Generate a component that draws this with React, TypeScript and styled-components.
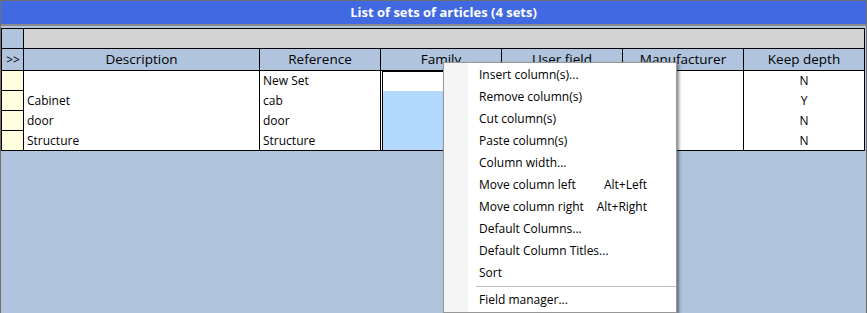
import React from 'react'
import styled, { createGlobalStyle } from 'styled-components'

const UI_FONT = `'Open Sans', 'Noto Sans', sans-serif`

const GlobalStyle = createGlobalStyle`
  html, body {
    margin: 0;
    padding: 0;
    overflow: hidden;
  }
  body {
    font-family: ${UI_FONT};
  }
`

const COLUMNS = [
  { key: 'description', title: 'Description', width: 236, align: 'left' },
  { key: 'reference', title: 'Reference', width: 121, align: 'left' },
  { key: 'family', title: 'Family', width: 121, align: 'left' },
  { key: 'userField', title: 'User field', width: 121, align: 'left' },
  { key: 'manufacturer', title: 'Manufacturer', width: 121, align: 'left' },
  { key: 'keepDepth', title: 'Keep depth', width: 120, align: 'center' },
] as const

type Row = Record<string, string> & { selected?: boolean }

const ROWS: Row[] = [
  { description: '', reference: 'New Set', family: '', userField: '', manufacturer: '', keepDepth: 'N' },
  { description: 'Cabinet', reference: 'cab', family: '', userField: '', manufacturer: '', keepDepth: 'Y', selected: true },
  { description: 'door', reference: 'door', family: '', userField: '', manufacturer: '', keepDepth: 'N', selected: true },
  { description: 'Structure', reference: 'Structure', family: '', userField: '', manufacturer: '', keepDepth: 'N', selected: true },
]

type MenuEntry = { label: string, shortcut?: string } | 'separator'

const MENU: MenuEntry[] = [
  { label: 'Insert column(s)...' },
  { label: 'Remove column(s)' },
  { label: 'Cut column(s)' },
  { label: 'Paste column(s)' },
  { label: 'Column width...' },
  { label: 'Move column left', shortcut: 'Alt+Left' },
  { label: 'Move column right', shortcut: 'Alt+Right' },
  { label: 'Default Columns...' },
  { label: 'Default Column Titles...' },
  { label: 'Sort' },
  'separator',
  { label: 'Field manager...' },
]

const Window = styled.div`
  position: relative;
  width: 867px;
  height: 313px;
  box-sizing: border-box;
  border: 1px solid #6f6f6f;
  border-bottom: none;
  background: #b0c4de;
  overflow: hidden;
`

const TitleBar = styled.div`
  height: 23px;
  line-height: 23px;
  padding-left: 20px;
  background: #4169e1;
  color: #fff;
  font-size: 13px;
  font-weight: bold;
  text-align: center;
  border-bottom: 2px solid #8a8a8a;
`

const Body = styled.div`
  padding-top: 2px;
`

const Grid = styled.div`
  width: 864px;
  box-sizing: border-box;
  border: 1px solid #000;
  border-bottom: none;
  background: #fff;
  color: #000;
`

const TopRow = styled.div`
  display: flex;
  height: 20px;
  box-sizing: border-box;
  border-bottom: 1px solid #000;
`

const Corner = styled.div`
  width: 22px;
  box-sizing: border-box;
  border-right: 1px solid #000;
  background: #b0c4de;
`

const TopFiller = styled.div`
  flex: 1;
  background: #d3d3d3;
`

const HeaderRow = styled.div`
  display: flex;
  height: 22px;
  box-sizing: border-box;
  border-bottom: 1px solid #000;
  background: #b0c4de;
`

const HeaderCell = styled.div<{ $width: number, $last?: boolean }>`
  width: ${p => p.$width}px;
  box-sizing: border-box;
  border-right: ${p => p.$last ? 'none' : '1px solid #000'};
  font-size: 13.5px;
  line-height: 21px;
  text-align: center;
  white-space: nowrap;
  overflow: hidden;
`

const SelectorHead = styled(HeaderCell)`
  font-size: 12px;
  padding-left: 1px;
`

const DataRow = styled.div<{ $last?: boolean }>`
  display: flex;
  height: 20px;
  box-sizing: border-box;
  border-bottom: ${p => p.$last ? '1px solid #000' : 'none'};
`

const Selector = styled.div<{ $last?: boolean }>`
  width: 22px;
  box-sizing: border-box;
  border-right: 1px solid #000;
  border-bottom: ${p => p.$last ? 'none' : '1px solid #000'};
  background: #ffffe0;
`

const DataCell = styled.div<{ $width: number, $align: string, $last?: boolean }>`
  width: ${p => p.$width}px;
  box-sizing: border-box;
  border-right: ${p => p.$last ? 'none' : '1px solid #000'};
  padding: 1px 3px 0;
  font-size: 12px;
  line-height: 17px;
  text-align: ${p => p.$align};
  white-space: nowrap;
  overflow: hidden;
`

const FocusCell = styled.div<{ $width: number }>`
  width: ${p => p.$width}px;
  box-sizing: border-box;
  border-right: 1px solid #000;
  padding: 0 1px;
`

const FocusFill = styled.div<{ $first?: boolean, $selected?: boolean }>`
  height: 100%;
  box-sizing: border-box;
  border-left: 1px solid #000;
  border-right: 1px solid #000;
  border-top: ${p => p.$first ? '1px solid #000' : 'none'};
  background: ${p => p.$selected ? '#b3d9ff' : '#fff'};
`

const Menu = styled.div`
  position: absolute;
  left: 442px;
  top: 61px;
  width: 234px;
  box-sizing: border-box;
  border: 1px solid #979797;
  padding: 1px 0 1px;
  background: linear-gradient(to right, #f5f5f5 0 24px, #fff 24px);
  box-shadow: 2px 2px 3px rgba(0, 0, 0, 0.45);
  font-size: 12px;
  color: #000;
`

const MenuItem = styled.div`
  display: flex;
  justify-content: space-between;
  height: 22px;
  line-height: 22px;
  padding: 0 29px 0 35px;
  white-space: nowrap;
`

const Separator = styled.div`
  height: 1px;
  margin: 2px 0 2px 32px;
  background: #bcbcbc;
`

export default function App () {
  return (
    <>
      <GlobalStyle />
      <Window>
        <TitleBar>List of sets of articles (4 sets)</TitleBar>
        <Body>
          <Grid>
            <TopRow>
              <Corner />
              <TopFiller />
            </TopRow>
            <HeaderRow>
              <SelectorHead $width={22}>&gt;&gt;</SelectorHead>
              {COLUMNS.map((col, i) => (
                <HeaderCell key={col.key} $width={col.width} $last={i === COLUMNS.length - 1}>
                  {col.title}
                </HeaderCell>
              ))}
            </HeaderRow>
            {ROWS.map((row, r) => {
              const last = r === ROWS.length - 1
              return (
                <DataRow key={r} $last={last}>
                  <Selector $last={last} />
                  {COLUMNS.map((col, i) => col.key === 'family'
                    ? (
                      <FocusCell key={col.key} $width={col.width}>
                        <FocusFill $first={r === 0} $selected={row.selected} />
                      </FocusCell>
                    )
                    : (
                      <DataCell
                        key={col.key}
                        $width={col.width}
                        $align={col.align}
                        $last={i === COLUMNS.length - 1}
                      >
                        {row[col.key]}
                      </DataCell>
                    ))}
                </DataRow>
              )
            })}
          </Grid>
        </Body>
        <Menu>
          {MENU.map((entry, i) => entry === 'separator'
            ? <Separator key={i} />
            : (
              <MenuItem key={i}>
                <span>{entry.label}</span>
                {entry.shortcut && <span>{entry.shortcut}</span>}
              </MenuItem>
            ))}
        </Menu>
      </Window>
    </>
  )
}
